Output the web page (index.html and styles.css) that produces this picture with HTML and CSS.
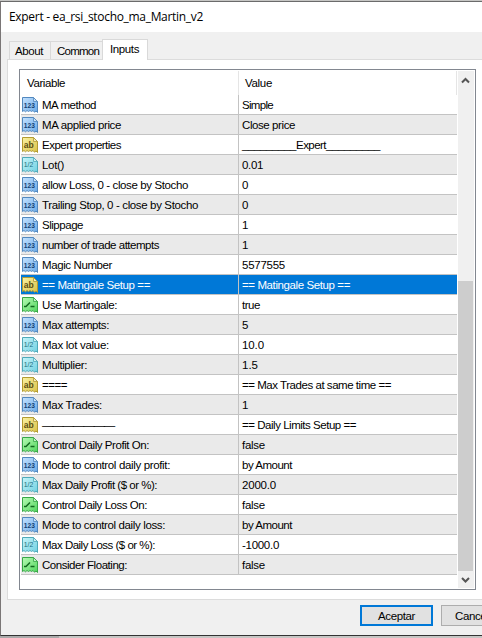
FILE: index.html
```html
<!DOCTYPE html>
<html lang="en">
<head>
<meta charset="utf-8">
<title>Expert - ea_rsi_stocho_ma_Martin_v2</title>
<link rel="stylesheet" href="styles.css">
</head>
<body>
<svg class="defs" width="0" height="0">
  <defs>
    <linearGradient id="g-int" x1="0" y1="0" x2="1" y2="1"><stop offset="0" stop-color="#c4e2ff"/><stop offset="1" stop-color="#6aa9e6"/></linearGradient>
    <linearGradient id="g-str" x1="0" y1="0" x2="1" y2="1"><stop offset="0" stop-color="#fbf3a4"/><stop offset="1" stop-color="#d9c044"/></linearGradient>
    <linearGradient id="g-dbl" x1="0" y1="0" x2="1" y2="1"><stop offset="0" stop-color="#c5f5fa"/><stop offset="1" stop-color="#6fcfe0"/></linearGradient>
    <linearGradient id="g-bool" x1="0" y1="0" x2="1" y2="1"><stop offset="0" stop-color="#b8fbb4"/><stop offset="1" stop-color="#4fd45c"/></linearGradient>
  </defs>
</svg>
<div class="window">
  <div class="title"><span data-w="194">Expert - ea_rsi_stocho_ma_Martin_v2</span></div>
  <div class="tabs">
    <div class="tab about"><span data-w="28">About</span></div>
    <div class="tab common"><span data-w="42">Common</span></div>
    <div class="tab active"><span data-w="29">Inputs</span></div>
  </div>
  <div class="panel">
    <div class="list">
      <div class="grid">
        <div class="head"><div class="c1"><span data-w="38">Variable</span></div><div class="c2"><span data-w="27">Value</span></div></div>
        <div id="rows"></div>
      </div>
      <div class="scroll">
        <svg width="15" height="19" viewBox="0 0 15 19"><path d="M4 11.5 7.5 8 11 11.5" fill="none" stroke="#555" stroke-width="2"/></svg>
        <div class="thumb"></div>
        <svg width="15" height="17" viewBox="0 0 15 17"><path d="M4 7 7.5 10.5 11 7" fill="none" stroke="#555" stroke-width="2"/></svg>
      </div>
    </div>
  </div>
  <div class="actions">
    <div class="btn primary"><span data-w="37">Aceptar</span></div>
    <div class="btn cancel"><span data-w="43">Cancelar</span></div>
  </div>
</div>
<div class="behind"><i></i></div>
<script src="script.js"></script>
</body>
</html>
```
FILE: styles.css
```css
* { box-sizing: border-box; }
body {
  margin: 0;
  width: 482px;
  height: 638px;
  overflow: hidden;
  background: #c6c6c4;
  font: 11.5px/19px "Liberation Sans", Arial, sans-serif;
  color: #000;
  padding-top: 1px;
}
.defs { display: block; height: 0; }
span { white-space: pre; display: inline-block; }
.window {
  height: 635px;
  border-top: 1px solid #6b6b6b;
  border-left: 1px solid #7a7676;
  border-bottom: 1px solid #333;
  background: #f0f0f0;
}
.title {
  height: 30px;
  background: #fff;
  padding: 5px 0 0 8px;
  font-size: 12px;
  font-family: "Open Sans", "Noto Sans", sans-serif;
}
.tabs {
  display: flex;
  align-items: flex-end;
  height: 27px;
  padding-left: 8px;
  position: relative;
}
.tab {
  height: 18px;
  border: 1px solid #d9d9d9;
  border-bottom: 0;
  line-height: 18px;
  padding-left: 5px;
}
.about { width: 42px; }
.common { width: 52px; border-left: 0; padding-left: 6px; }
.tab.active {
  width: 46px;
  height: 21px;
  margin: 0 0 -1px -1px;
  padding-left: 7px;
  background: #fff;
}
.panel {
  height: 541px;
  margin-left: 6px;
  padding: 9px 0 0 11px;
  border: 1px solid #dcdcdc;
  border-right: 0;
  background: #fff;
}
.list {
  display: flex;
  justify-content: space-between;
  width: 457px;
  height: 521px;
  padding: 1px;
  border: 1px solid #828790;
}
.tab.active { z-index: 1; }
.grid { width: 436px; }
.head { display: flex; height: 24px; line-height: 25px; }
.head .c1 { width: 218px; padding-left: 6px; border-right: 1px solid #e5e5e5; }
.head .c2 { flex: 1; padding-left: 6px; border-right: 1px solid #e5e5e5; }
.row { display: flex; height: 20px; line-height: 20px; border-bottom: 1px solid #c3c3c3; }
.row:nth-child(even) { background: #eaeaea; }
.row .c1 { display: flex; width: 218px; padding-left: 1px; border-right: 1px solid #c3c3c3; }
.row .c2 { padding-left: 3px; }
.row.selected { background: #0078d7; color: #fff; }
.icon { width: 16px; height: 16px; margin: 2px 4px 0 0; flex: none; }
.icon text { font: bold 7.5px "Liberation Sans", sans-serif; }
.icon .ab { font-size: 9.5px; }
.icon .half { font-size: 8px; font-weight: normal; }
.scroll {
  display: flex;
  flex-direction: column;
  width: 16px;
  background: #f0f0f0;
}
.scroll svg { display: block; }
.thumb { height: 290px; width: 15px; margin-top: auto; background: #cdcdcd; }
.actions { display: flex; gap: 8px; padding: 5px 0 0 359px; overflow: hidden; }
.btn {
  height: 21px;
  flex: none;
  border: 1px solid #adadad;
  background: #e1e1e1;
  text-align: center;
  line-height: 20px;
}
.btn.primary { width: 73px; border: 2px solid #0078d7; line-height: 18px; }
.btn.cancel { width: 73px; text-align: left; padding-left: 13px; }
.behind { height: 2px; }
.behind i { display: block; width: 59px; height: 2px; background: #aaa; }
```
FILE: script.js
```js
// kind, variable, width, value, width
const data = [
  ["int", "MA method", 54, "Simple", 31],
  ["int", "MA applied price", 79, "Close price", 53],
  ["str", "Expert properties", 79, [["_________", 54], ["Expert", 30], ["_________", 54]]],
  ["dbl", "Lot()", 22, "0.01", 21],
  ["int", "allow Loss, 0 - close by Stocho", 146, "0", 7],
  ["int", "Trailing Stop, 0 - close by Stocho", 156, "0", 7],
  ["int", "Slippage", 41, "1", 7],
  ["int", "number of trade attempts", 117, "1", 7],
  ["int", "Magic Number", 70, "5577555", 43],
  ["str", "== Matingale Setup ==", 108, "== Matingale Setup ==", 108],
  ["bool", "Use Martingale:", 75, "true", 18],
  ["int", "Max attempts:", 67, "5", 7],
  ["dbl", "Max lot value:", 67, "10.0", 22],
  ["dbl", "Multiplier:", 45, "1.5", 16],
  ["str", "====", 25, "== Max Trades at same time ==", 149],
  ["int", "Max Trades:", 60, "1", 7],
  ["str", "———————", 72, "== Daily Limits Setup ==", 114],
  ["bool", "Control Daily Profit On:", 107, "false", 23],
  ["int", "Mode to control daily profit:", 128, "by Amount", 50],
  ["dbl", "Max Daily Profit ($ or %):", 115, "2000.0", 34],
  ["bool", "Control Daily Loss On:", 105, "false", 23],
  ["int", "Mode to control daily loss:", 123, "by Amount", 50],
  ["dbl", "Max Daily Loss ($ or %):", 113, "-1000.0", 37],
  ["bool", "Consider Floating:", 85, "false", 23]
];
const ink = { int: "#123e72", str: "#5b4e12", dbl: "#1b6f7f", bool: "#12691f" };
const edge = { int: "#5288bf", str: "#b39b32", dbl: "#4fa9b9", bool: "#38a647" };
const mark = {
  int: '<text x="1.8" y="10.9" textLength="11" lengthAdjust="spacingAndGlyphs">123</text>',
  str: '<text class="ab" x="1.8" y="11" textLength="10" lengthAdjust="spacingAndGlyphs">ab</text>',
  dbl: '<text class="half" x="1.8" y="9.5" textLength="9.5" lengthAdjust="spacingAndGlyphs">1/2</text>',
  bool: '<path d="M2 9.5H4L8 5.5M8.5 9.5H12.5" fill="none" stroke="#12691f" stroke-width="1.5"/>'
};
const icon = k => `<svg class="icon" viewBox="0 0 16 16"><path d="M.5.5H11.5L15.5 4.5V15.5L14 14 12.5 15.2 11 13.5 9.5 14.5 8 13.5 6.5 14.5 5 13.5 3.5 14.8 2 13.5 .5 14.5Z" fill="url(#g-${k})" stroke="${edge[k]}"/><path d="M11.5.5V4.5H15.5Z" fill="#fff" fill-opacity=".5" stroke="${edge[k]}" stroke-width=".8"/><g fill="${ink[k]}">${mark[k]}</g></svg>`;
const label = (t, w) => `<span data-w="${w}">${t}</span>`;
document.getElementById("rows").innerHTML = data.map(([k, a, aw, b, bw], i) => {
  const value = Array.isArray(b) ? b.map(p => label(...p)).join("") : label(b, bw);
  return `<div class="row${i === 9 ? " selected" : ""}"><div class="c1">${icon(k)}${label(a, aw)}</div><div class="c2">${value}</div></div>`;
}).join("");
document.querySelectorAll("span[data-w]").forEach(s => {
  const n = s.textContent.length;
  if (n > 1) s.style.letterSpacing = (s.dataset.w - s.getBoundingClientRect().width) / n + "px";
});
```
